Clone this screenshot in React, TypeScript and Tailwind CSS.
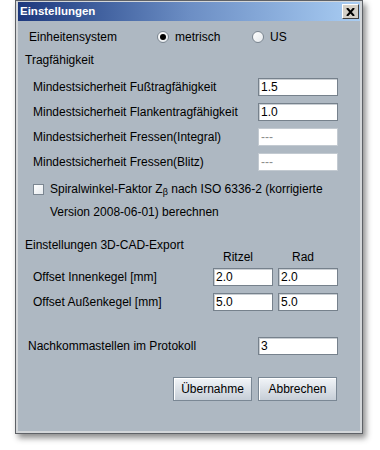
import type { ReactNode } from 'react';

const font = { fontFamily: '"Liberation Sans", Arial, sans-serif' };

function Field({ value, width = 'w-[80px]', disabled = false }: { value: string; width?: string; disabled?: boolean }) {
  return (
    <div
      className={`flex h-[18px] ${width} items-center bg-white pl-[2px] ${
        disabled
          ? 'border border-[#c3cad1] text-[#8c8c8c]'
          : 'border border-[#76818c] text-black shadow-[inset_1px_1px_0_#c9ced3]'
      }`}
    >
      {value}
    </div>
  );
}

function Radio({ checked }: { checked?: boolean }) {
  return (
    <span className="flex h-[12px] w-[12px] items-center justify-center rounded-full border border-[#7b8691] bg-gradient-to-br from-white to-[#e4e8ec]">
      {checked && <span className="h-[6px] w-[6px] rounded-full bg-black" />}
    </span>
  );
}

function Button({ children }: { children: ReactNode }) {
  return (
    <button
      type="button"
      className="flex h-[24px] w-[79px] items-center justify-center border border-[#7a8794] bg-gradient-to-b from-[#f2f5f8] to-[#c6ced7] text-black shadow-[inset_1px_1px_0_#ffffff]"
    >
      {children}
    </button>
  );
}

function SafetyRow({ label, value, disabled }: { label: string; value: string; disabled?: boolean }) {
  return (
    <div className="flex h-[18px] items-center pl-[15px]">
      <span className="w-[225px]">{label}</span>
      <Field value={value} disabled={disabled} />
    </div>
  );
}

function OffsetRow({ label, a, b }: { label: string; a: string; b: string }) {
  return (
    <div className="flex h-[18px] items-center pl-[15px]">
      <span className="w-[180px]">{label}</span>
      <Field value={a} width="w-[60px]" />
      <div className="w-[5px]" />
      <Field value={b} width="w-[60px]" />
    </div>
  );
}

export default function App() {
  return (
    <div className="h-[450px] w-[380px] bg-white pl-[15px] text-[12px]" style={font}>
      <div className="flex h-[434px] w-[348px] flex-col border border-[#5e6166] bg-[#d3d6d9] px-[2px] pb-[2px] pt-px shadow-[3px_4px_6px_rgba(0,0,0,0.45)]">
        <div className="flex h-[19px] items-center justify-between bg-gradient-to-r from-[#1d387d] via-[#6c8ec4] to-[#a9cdf3] pl-[2px] pr-[1px]">
          <span className="text-[11.5px] font-bold text-white">Einstellungen</span>
          <span className="flex h-[15px] w-[17px] items-center justify-center border border-t-white border-l-white border-b-[#404040] border-r-[#404040] bg-[#d4d0c8]">
            <svg width="9" height="8" viewBox="0 0 9 8">
              <path d="M1 0 L8 8 M8 0 L1 8" stroke="#000" strokeWidth="2" />
            </svg>
          </span>
        </div>
        <div className="flex flex-1 flex-col bg-[#aeb8c2] text-black">
          <div className="mt-[7px] flex h-[18px] items-center pl-[11px]">
            <span className="w-[128px]">Einheitensystem</span>
            <Radio checked />
            <span className="ml-[6px] w-[77px]">metrisch</span>
            <Radio />
            <span className="ml-[6px]">US</span>
          </div>
          <div className="mt-[5px] flex h-[18px] items-center pl-[7px]">Tragfähigkeit</div>
          <div className="mt-[9px] flex flex-col gap-[7px]">
            <SafetyRow label="Mindestsicherheit Fußtragfähigkeit" value="1.5" />
            <SafetyRow label="Mindestsicherheit Flankentragfähigkeit" value="1.0" />
            <SafetyRow label="Mindestsicherheit Fressen(Integral)" value="---" disabled />
            <SafetyRow label="Mindestsicherheit Fressen(Blitz)" value="---" disabled />
          </div>
          <div className="mt-[7px] flex pl-[15px] leading-[23px]">
            <span className="mt-[6px] h-[11px] w-[11px] shrink-0 border border-[#7b8691] bg-gradient-to-br from-white to-[#e6eaee]" />
            <span className="ml-[6px]">
              Spiralwinkel-Faktor Z<sub className="text-[9px]">β</sub> nach ISO 6336-2 (korrigierte
              <br />
              Version 2008-06-01) berechnen
            </span>
          </div>
          <div className="mt-[15px] flex h-[12px] items-center pl-[7px]">Einstellungen 3D-CAD-Export</div>
          <div className="flex h-[12px] items-center">
            <span className="ml-[205px] w-[69px]">Ritzel</span>
            <span>Rad</span>
          </div>
          <div className="mt-[5px] flex flex-col gap-[7px]">
            <OffsetRow label="Offset Innenkegel [mm]" a="2.0" b="2.0" />
            <OffsetRow label="Offset Außenkegel [mm]" a="5.0" b="5.0" />
          </div>
          <div className="mt-[26px] flex h-[18px] items-center pl-[10px]">
            <span className="w-[230px]">Nachkommastellen im Protokoll</span>
            <Field value="3" />
          </div>
          <div className="mt-[22px] flex gap-[6px] pl-[155px]">
            <Button>Übernahme</Button>
            <Button>Abbrechen</Button>
          </div>
        </div>
      </div>
    </div>
  );
}
